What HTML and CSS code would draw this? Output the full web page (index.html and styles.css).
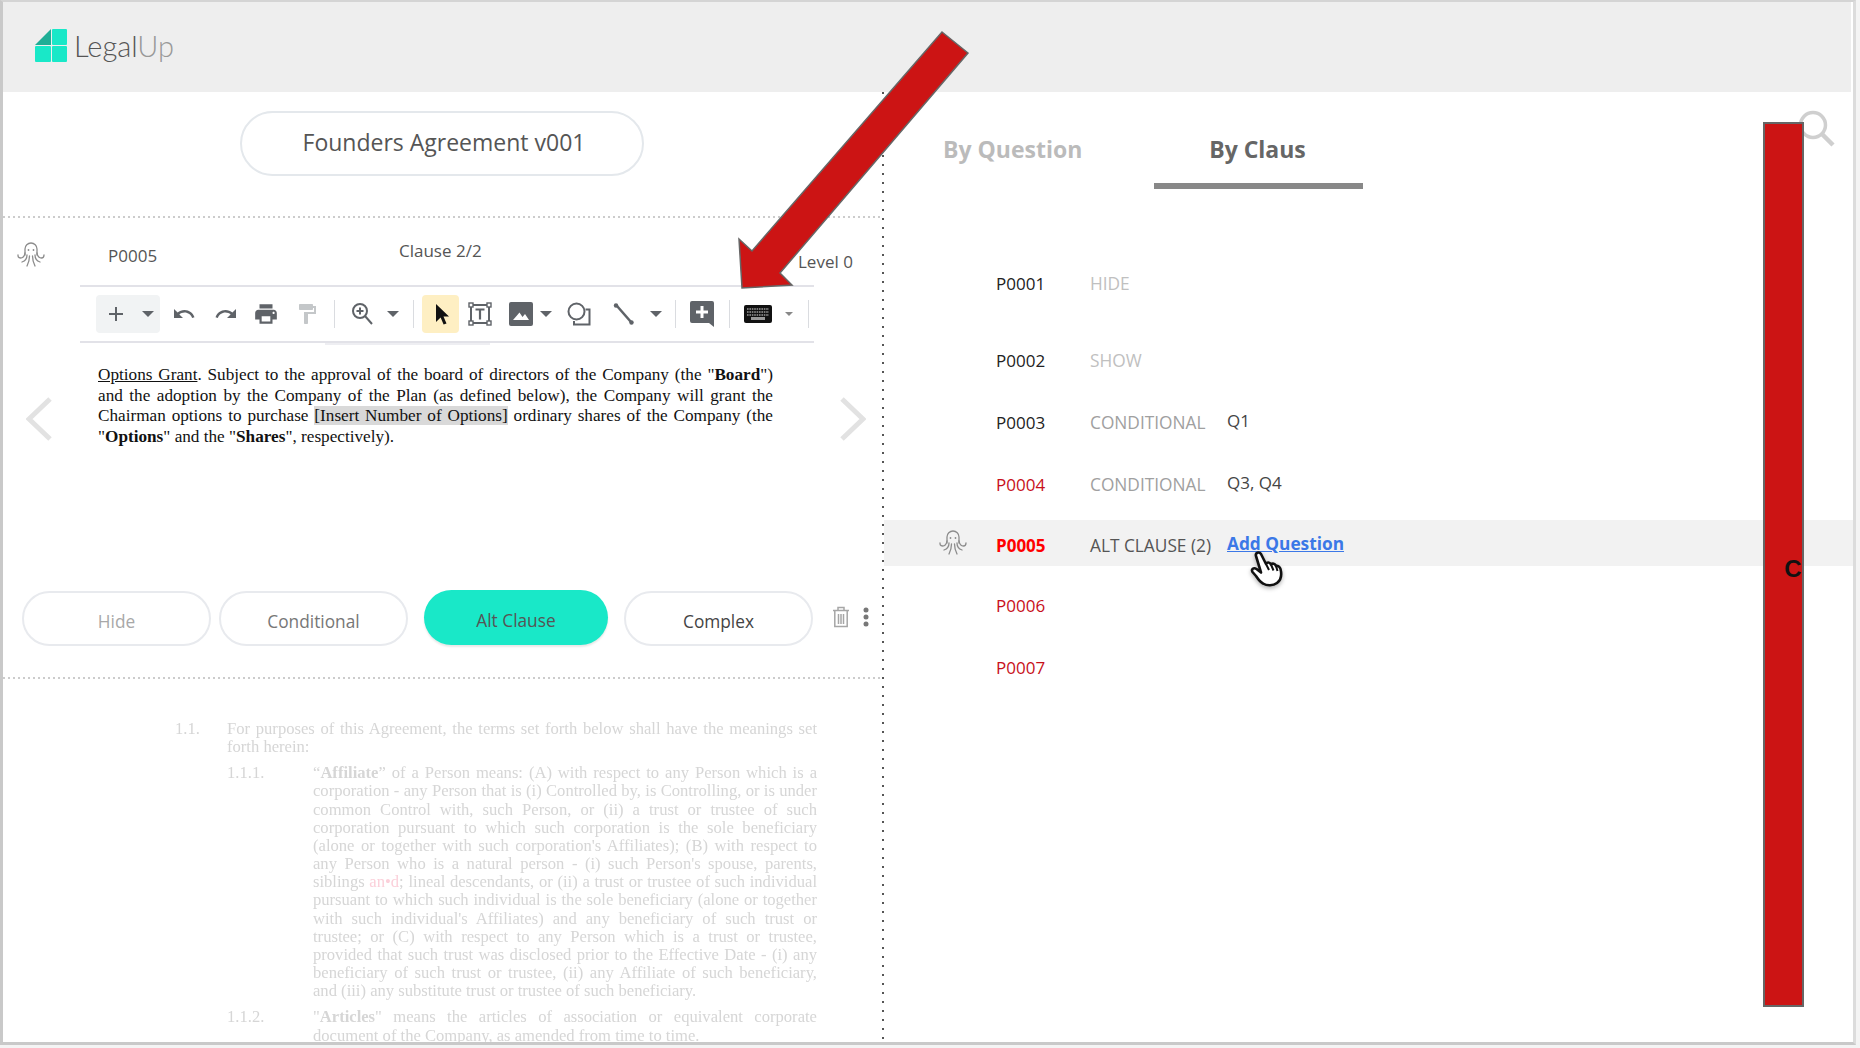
FILE: index.html
```html
<!DOCTYPE html>
<html lang="en">
<head>
  <meta charset="UTF-8" />
  <title>LegalUp</title>
  <link rel="stylesheet" href="styles.css">
</head>
<body>
  <div class="frame">
    <header class="topbar">
      <svg class="logo-mark" width="32" height="33" viewBox="0 0 32 33">
        <path d="M16 0V16H0Z" fill="#1fae96"/>
        <rect x="17" width="15" height="16" rx="1" fill="#19e8c8"/>
        <rect y="17" width="16" height="16" rx="1" fill="#19e8c8"/>
        <rect x="17" y="17" width="15" height="16" rx="1" fill="#19e8c8"/>
      </svg>
      <div class="logo-text">Legal<span>Up</span></div>
    </header>

    <div class="columns">
      <section class="left">
        <div class="title-area">
          <div class="title-pill">Founders Agreement v001</div>
        </div>

        <div class="clause-head">
          <svg class="octo" width="28" height="26" viewBox="0 0 28 26"><use href="#octopus"/></svg>
          <span class="clause-code">P0005</span>
          <span class="clause-count">Clause 2/2</span>
          <span class="clause-level">Level 0</span>
        </div>

        <div class="toolbar">
          <div class="tb-group">
            <svg width="24" height="24" viewBox="0 0 24 24"><path d="M19 13h-6v6h-2v-6H5v-2h6V5h2v6h6v2z"/></svg>
            <i class="caret"></i>
          </div>
          <div class="tb"><svg width="24" height="24" viewBox="0 0 24 24"><path d="M12.5 8c-2.65 0-5.05.99-6.9 2.6L2 7v9h9l-3.62-3.62c1.39-1.16 3.16-1.88 5.12-1.88 3.54 0 6.55 2.31 7.6 5.5l2.37-.78C21.08 11.03 17.15 8 12.5 8z"/></svg></div>
          <div class="tb"><svg width="24" height="24" viewBox="0 0 24 24"><path d="M18.4 10.6C16.55 8.99 14.15 8 11.5 8c-4.65 0-8.58 3.03-9.96 7.22L3.9 16c1.05-3.19 4.05-5.5 7.6-5.5 1.95 0 3.73.72 5.12 1.88L13 16h9V7l-3.6 3.6z"/></svg></div>
          <div class="tb"><svg width="26" height="26" viewBox="0 0 24 24"><path d="M19 8H5c-1.66 0-3 1.34-3 3v6h4v4h12v-4h4v-6c0-1.66-1.34-3-3-3zm-3 11H8v-5h8v5zm3-7c-.55 0-1-.45-1-1s.45-1 1-1 1 .45 1 1-.45 1-1 1zm-1-9H6v4h12V3z"/></svg></div>
          <div class="tb off"><svg width="24" height="24" viewBox="0 0 24 24"><path d="M18 4V3c0-.55-.45-1-1-1H5c-.55 0-1 .45-1 1v4c0 .55.45 1 1 1h12c.55 0 1-.45 1-1V6h1v4H9v11c0 .55.45 1 1 1h2c.55 0 1-.45 1-1v-9h8V4h-3z"/></svg></div>
          <div class="tb"><i class="sep"></i></div>
          <div class="tb"><svg class="line" width="24" height="26" viewBox="0 0 24 26"><circle cx="10" cy="10" r="7"/><path d="M15 15l7 8M10 6.500v7M6.500 10h7"/></svg></div>
          <div class="tb"><i class="caret"></i></div>
          <div class="tb"><i class="sep"></i></div>
          <div class="tb active"><svg width="24" height="26" viewBox="0 0 24 26"><path class="black" d="M7 3v18l4.600-4.400 3 7 2.900-1.200-3-6.900H20z"/></svg></div>
          <div class="tb"><svg class="line" width="26" height="26" viewBox="0 0 26 26"><path d="M4 4h18v18H4z"/><path d="M8.500 8.500h9M13 8.500v10" stroke-width="2.200"/><g class="handles"><rect x="2" y="2" width="4" height="4"/><rect x="20" y="2" width="4" height="4"/><rect x="2" y="20" width="4" height="4"/><rect x="20" y="20" width="4" height="4"/></g></svg></div>
          <div class="tb"><svg width="24" height="24" viewBox="0 0 24 24"><path fill-rule="evenodd" d="M2 0h20a2 2 0 0 1 2 2v20a2 2 0 0 1-2 2H2a2 2 0 0 1-2-2V2a2 2 0 0 1 2-2zm2 18h16l-4-6-2.500 3-3-4.500-3 3.500z"/></svg></div>
          <div class="tb"><i class="caret"></i></div>
          <div class="tb"><svg class="line" width="24" height="24" viewBox="0 0 24 24"><circle cx="9.500" cy="9.500" r="8"/><path d="M18.500 7.500h4v15H7v-3.500"/></svg></div>
          <div class="tb"><svg class="line thick" width="24" height="24" viewBox="0 0 24 24"><path d="M5 4l14 16"/><circle class="dot" cx="4" cy="3.500" r="2.200"/><circle class="dot" cx="19.500" cy="20.500" r="2.200"/></svg></div>
          <div class="tb"><i class="caret"></i></div>
          <div class="tb"><i class="sep"></i></div>
          <div class="tb"><svg width="24" height="26" viewBox="0 0 24 26"><path fill-rule="evenodd" d="M2 0h20a2 2 0 0 1 2 2v24l-5-4H2a2 2 0 0 1-2-2V2a2 2 0 0 1 2-2zm8.500 5v4.500H6v3h4.500V17h3v-4.500H18v-3h-4.500V5z"/></svg></div>
          <div class="tb"><i class="sep"></i></div>
          <div class="tb"><svg width="28" height="18" viewBox="0 0 28 18"><rect class="black" width="28" height="18" rx="2"/><path class="keys" d="M3 4h22M3 7h22M3 10h22"/><rect class="bar" x="7" y="12" width="14" height="3"/></svg></div>
          <div class="tb"><i class="caret small"></i></div>
          <div class="tb"><i class="sep"></i></div>
        </div>
        <div class="ruler"></div>

        <div class="doc-row">
          <svg class="chev" width="26" height="44" viewBox="0 0 26 44"><path d="M24 2L3 22l21 20"/></svg>
          <div class="doc">
            <div class="just"><u>Options Grant</u>. Subject to the approval of the board of directors of the Company (the "<b>Board</b>")</div>
            <div class="just">and the adoption by the Company of the Plan (as defined below), the Company will grant the</div>
            <div class="just">Chairman options to purchase <mark>[Insert Number of Options]</mark> ordinary shares of the Company (the</div>
            <div>"<b>Options</b>" and the "<b>Shares</b>", respectively).</div>
          </div>
          <svg class="chev" width="26" height="44" viewBox="0 0 26 44"><path d="M2 2l21 20L2 42"/></svg>
        </div>

        <div class="actions">
          <button class="pill hide">Hide</button>
          <button class="pill cond">Conditional</button>
          <button class="pill alt">Alt Clause</button>
          <button class="pill complex">Complex</button>
          <svg class="trash" width="18" height="22" viewBox="0 0 18 22" fill="none" stroke="#a6a6a6" stroke-width="1.500"><path d="M1 4.500h16M6 4V1.500h6V4M2.800 5v15.500h12.400V5M6.500 8v10M9 8v10M11.500 8v10"/></svg>
          <svg class="kebab" width="6" height="20" viewBox="0 0 6 20" fill="#777"><circle cx="3" cy="3" r="2.500"/><circle cx="3" cy="10" r="2.500"/><circle cx="3" cy="17" r="2.500"/></svg>
        </div>

        <div class="faded">
          <div class="f-row f-1"><span class="num">1.1.</span>
            <div class="f-text">
              <div class="just">For purposes of this Agreement, the terms set forth below shall have the meanings set</div>
              <div>forth herein:</div>
            </div>
          </div>
          <div class="f-row f-2"><span class="num">1.1.1.</span>
            <div class="f-text">
              <div class="just">“<b>Affiliate</b>” of a Person means: (A) with respect to any Person which is a</div>
              <div class="just">corporation - any Person that is (i) Controlled by, is Controlling, or is under</div>
              <div class="just">common Control with, such Person, or (ii) a trust or trustee of such</div>
              <div class="just">corporation pursuant to which such corporation is the sole beneficiary</div>
              <div class="just">(alone or together with such corporation's Affiliates); (B) with respect to</div>
              <div class="just">any Person who is a natural person - (i) such Person's spouse, parents,</div>
              <div class="just">siblings <em>an•d</em>; lineal descendants, or (ii) a trust or trustee of such individual</div>
              <div class="just">pursuant to which such individual is the sole beneficiary (alone or together</div>
              <div class="just">with such individual's Affiliates) and any beneficiary of such trust or</div>
              <div class="just">trustee; or (C) with respect to any Person which is a trust or trustee,</div>
              <div class="just">provided that such trust was disclosed prior to the Effective Date - (i) any</div>
              <div class="just">beneficiary of such trust or trustee, (ii) any Affiliate of such beneficiary,</div>
              <div>and (iii) any substitute trust or trustee of such beneficiary.</div>
            </div>
          </div>
          <div class="f-row f-2"><span class="num">1.1.2.</span>
            <div class="f-text">
              <div class="just">"<b>Articles</b>" means the articles of association or equivalent corporate</div>
              <div>document of the Company, as amended from time to time.</div>
            </div>
          </div>
        </div>
      </section>

      <section class="right">
        <div class="tabs">
          <div class="tab">By Question</div>
          <div class="tab current">By Claus</div>
        </div>
        <div class="rows">
          <div class="row first"><span class="code">P0001</span><span class="label faint">HIDE</span></div>
          <div class="row"><span class="code">P0002</span><span class="label faint">SHOW</span></div>
          <div class="row"><span class="code">P0003</span><span class="label">CONDITIONAL</span><span class="q">Q1</span></div>
          <div class="row"><span class="code red">P0004</span><span class="label">CONDITIONAL</span><span class="q">Q3, Q4</span></div>
          <div class="row selected">
            <svg class="octo-row" width="28" height="26" viewBox="0 0 28 26"><use href="#octopus"/></svg>
            <span class="code bright">P0005</span><span class="label dark">ALT CLAUSE (2)</span><a class="q add" href="#">Add Question</a>
            <svg class="hand" width="34" height="36" viewBox="0 0 34 36">
              <path d="M6 5C5 2 9 0 11 3L16 13C17 11 19.500 11 21 13.500C22.500 12 25 12.500 26 15C28 14.500 30 16 30.500 18C32 24 31 29 27 32C23 35 17 35 13 32.500C10 31 8 28 6 25L2.500 21C1 18.500 3.500 16 6.500 18L11 21.500Z" fill="#fff" stroke="#111" stroke-width="2.600" stroke-linejoin="round"/>
              <path d="M16 13l3 6M21 13.500l2.500 6M26 15l1.500 5" fill="none" stroke="#111" stroke-width="2"/>
            </svg>
          </div>
          <div class="row"><span class="code red">P0006</span></div>
          <div class="row"><span class="code red">P0007</span></div>
        </div>
      </section>
    </div>

    <svg class="search" width="38" height="38" viewBox="0 0 38 38" fill="none" stroke="#cfcfcf" stroke-width="3.500"><circle cx="15" cy="15" r="12.500"/><path d="M24 24l11 11" stroke-width="4.500"/></svg>
    <div class="red-bar"><span>C</span></div>
    <svg class="red-arrow" width="240" height="270" viewBox="0 0 240 270"><path d="M207 2L233 23 45 243 57 255 7 258 4 209 17 221Z" fill="#cc1414" stroke="#666" stroke-width="1.500"/></svg>
  </div>

  <svg class="defs" width="0" height="0">
    <symbol id="octopus" viewBox="0 0 28 26">
      <g fill="none" stroke="#8c8c8c" stroke-width="1.300" stroke-linecap="round">
        <path d="M8 14V8a6 6 0 0 1 12 0v6"/>
        <path d="M8 12c-.500 3-2 5-4.500 5S1 15 1 14"/>
        <path d="M20 12c.500 3 2 5 4.500 5S27 15 27 14"/>
        <path d="M10 14c0 4-2 6-5 7"/>
        <path d="M18 14c0 4 2 6 5 7"/>
        <path d="M12.500 15c0 4-1 7-2.500 10"/>
        <path d="M15.500 15c0 4 1 7 2.500 10"/>
      </g>
      <circle cx="11.500" cy="9" r=".9" fill="#8c8c8c"/>
      <circle cx="16.500" cy="9" r=".9" fill="#8c8c8c"/>
    </symbol>
  </svg>
</body>
</html>
```

FILE: styles.css
```css
* {
  margin: 0;
  padding: 0;
  box-sizing: border-box;
}
html, body {
  height: 100%;
  overflow: hidden;
}
body {
  background: #f4f4f4;
  font-family: 'Open Sans', sans-serif;
  color: #444;
}
.defs {
  position: absolute;
}
.frame {
  position: relative;
  width: 1856px;
  height: 1045px;
  background: #fff;
  border-top: 2px solid #d4d4d4;
  border-left: 3px solid #c9c9c9;
  border-right: 3px solid #dcdcdc;
  border-bottom: 3px solid #c9c9c9;
  overflow: hidden;
}

/* Barra superior */
.topbar {
  height: 90px;
  background: #eee;
  display: flex;
  align-items: center;
  padding-left: 32px;
  margin-right: 2px;
}
.logo-mark {
  margin-top: -4px;
}
.logo-text {
  font-family: 'Lato', sans-serif;
  font-weight: 300;
  font-size: 29px;
  color: #555;
  margin-left: 7px;
  margin-top: -3px;
}
.logo-text span {
  color: #999;
}

.columns {
  display: grid;
  grid-template-columns: 881px 1fr;
  height: 951px;
}

/* Columna izquierda */
.left {
  background: repeating-linear-gradient(to bottom, #555 0 2px, transparent 2px 9px) right top / 2px 100% no-repeat;
}
.title-area {
  height: 126px;
  padding: 19px 0 0 237px;
  background: repeating-linear-gradient(to right, #ccc 0 2px, transparent 2px 5px) left bottom / 878px 2px no-repeat;
}
.title-pill {
  width: 404px;
  height: 65px;
  border: 2px solid #e4e8ec;
  border-radius: 33px;
  padding-left: 4px;
  font-size: 23px;
  line-height: 58px;
  text-align: center;
  color: #555;
}
.clause-head {
  height: 67px;
  position: relative;
  font-size: 17px;
  color: #555;
}
.octo {
  position: absolute;
  left: 14px;
  top: 23px;
}
.clause-code {
  position: absolute;
  left: 105px;
  top: 26px;
}
.clause-count {
  position: absolute;
  left: 396px;
  top: 21px;
}
.clause-level {
  position: absolute;
  left: 795px;
  top: 32px;
}
.toolbar {
  margin-left: 77px;
  width: 734px;
  height: 58px;
  padding: 8px 0 0 16px;
  border-top: 2px solid #e2e2e8;
  border-bottom: 2px solid #e2e2e8;
  display: grid;
  grid-template-columns: 64px 48px 36px 44px 38px 16px 40px 22px 18px 37px 42px 40px 10px 56px 34px 30px 8px 46px 8px 50px 12px 26px;
  grid-template-rows: 38px;
}
.toolbar svg {
  fill: #5f6368;
  display: block;
}
.toolbar svg.line {
  fill: none;
  stroke: #5f6368;
  stroke-width: 2;
}
.toolbar svg.thick {
  stroke-width: 2.6;
}
.toolbar svg .dot {
  fill: #5f6368;
  stroke: none;
}
.toolbar svg .handles {
  fill: #fff;
  stroke-width: 1.4;
}
.toolbar svg .black {
  fill: #111;
}
.toolbar svg .keys {
  fill: none;
  stroke: #999;
  stroke-width: 1.6;
  stroke-dasharray: 1.6 .8;
}
.toolbar svg .bar {
  fill: #999;
}
.tb, .tb-group {
  display: flex;
  align-items: center;
  justify-content: center;
}
.tb-group {
  background: #f1f3f4;
  border-radius: 4px;
  justify-content: flex-start;
  padding-left: 8px;
}
.tb-group .caret {
  margin-left: 14px;
}
.tb.off svg {
  fill: #c4c7c9;
}
.tb.active {
  background: #feefc3;
  border-radius: 4px;
}
.caret {
  width: 0;
  height: 0;
  border-left: 6px solid transparent;
  border-right: 6px solid transparent;
  border-top: 6px solid #5f6368;
}
.caret.small {
  border-left-width: 4px;
  border-right-width: 4px;
  border-top-width: 4px;
  border-top-color: #888;
}
.sep {
  width: 1px;
  height: 28px;
  background: #dadce0;
}
.ruler {
  margin-left: 322px;
  width: 165px;
  height: 2px;
  background: #eeeef2;
}

.doc-row {
  height: 246px;
  display: flex;
  align-items: flex-start;
  padding: 20px 0 0 23px;
}
.chev {
  fill: none;
  stroke: #e2e2e2;
  stroke-width: 5;
  margin-top: 32px;
}
.doc {
  width: 675px;
  margin: 0 67px 0 46px;
  font-family: 'Liberation Serif', serif;
  font-size: 17.2px;
  line-height: 20.6px;
  color: #111;
}
.just {
  text-align: justify;
  text-align-last: justify;
}
mark {
  background: #d9d9d9;
  color: inherit;
}

.actions {
  height: 88px;
  display: flex;
  align-items: flex-start;
  padding-left: 19px;
  background: repeating-linear-gradient(to right, #ccc 0 2px, transparent 2px 5px) left bottom / 878px 2px no-repeat;
}
.pill {
  height: 55px;
  width: 189px;
  border: 2px solid #e8eaee;
  border-radius: 28px;
  background: #fff;
  font-family: 'Open Sans', sans-serif;
  font-size: 17.3px;
  color: #444;
  padding-top: 6px;
}
.pill.hide {
  color: #a8a8a8;
}
.pill.cond {
  margin-left: 8px;
  color: #777;
}
.pill.alt {
  margin: -1px 0 0 16px;
  width: 184px;
  border: 0;
  background: #19e8c8;
  color: #555;
  box-shadow: 0 2px 2px #e8e8e8;
}
.pill.complex {
  margin-left: 16px;
}
.trash {
  margin: 15px 0 0 19px;
}
.kebab {
  margin: 16px 0 0 13px;
}

/* Texto atenuado */
.faded {
  padding: 41px 0 0 172px;
  font-family: 'Liberation Serif', serif;
  font-size: 16.6px;
  line-height: 18.15px;
  color: #d6d6d6;
  filter: blur(0.4px);
}
.f-row {
  display: flex;
  margin-right: 67px;
}
.num {
  flex: none;
  width: 52px;
}
.f-text {
  flex: 1;
}
.f-2 {
  margin-left: 52px;
  margin-top: 8px;
}
.f-2 .num {
  width: 86px;
}
em {
  font-style: normal;
  color: #fbd0da;
}

/* Columna derecha */
.tabs {
  display: flex;
  padding-top: 41px;
  font-size: 23px;
  font-weight: 700;
  color: #bbb;
}
.tab {
  width: 270px;
  height: 56px;
  padding: 0 0 0 59px;
}
.tab.current {
  width: 209px;
  padding: 0 2px 0 0;
  text-align: center;
  color: #666;
  border-bottom: 6px solid #888;
}
.rows {
  padding-top: 71px;
  font-size: 17px;
}
.row {
  position: relative;
  height: 46px;
  margin-bottom: 16px;
  display: grid;
  grid-template-columns: 94px 137px 1fr;
  padding-left: 112px;
  align-items: center;
}
.row.first {
  margin-bottom: 31px;
}
.code {
  color: #222;
}
.code.red {
  color: #c8101a;
}
.code.bright {
  color: #f00;
  font-weight: 700;
}
.label {
  color: #a0a0a0;
  font-size: 17.3px;
}
.label.faint {
  color: #c0c0c0;
}
.label.dark {
  color: #555;
}
.q {
  color: #444;
  margin-bottom: 3px;
}
.selected {
  background: #f2f2f2;
  margin-top: -3px;
  padding-top: 4px;
}
.octo-row {
  position: absolute;
  left: 55px;
  top: 9px;
}
.add {
  justify-self: start;
  color: #3b78e7;
  font-weight: 700;
  font-size: 17.3px;
}
.hand {
  position: absolute;
  left: 366px;
  top: 31px;
  filter: drop-shadow(0 2px 2px rgba(0,0,0,0.3));
}

/* Anotaciones encima de la captura */
.search {
  position: absolute;
  right: 17px;
  top: 108px;
}
.red-bar {
  position: absolute;
  left: 1760px;
  top: 120px;
  width: 41px;
  height: 885px;
  background: #cc1414;
  border: 2px solid #666;
  display: flex;
  align-items: center;
  justify-content: center;
  font-family: 'Liberation Sans', sans-serif;
  font-weight: 700;
  font-size: 24px;
  color: #111;
  padding-left: 19px;
}
.red-bar span {
  margin-top: 8px;
}
.red-arrow {
  position: absolute;
  left: 732px;
  top: 28px;
}
```
